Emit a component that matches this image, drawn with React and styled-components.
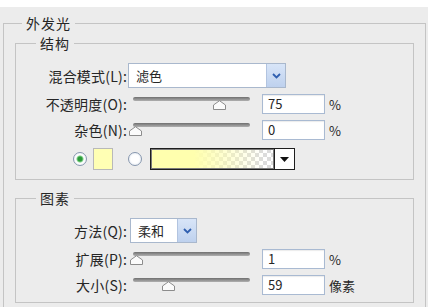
import React from "react";
import styled, { createGlobalStyle } from "styled-components";

const GlobalStyle = createGlobalStyle`
  html, body {
    margin: 0;
    padding: 0;
  }
  body {
    background: #ececec;
    color: #262626;
    font-family: "Noto Sans CJK SC", "Liberation Sans", sans-serif;
    font-size: 14px;
    overflow: hidden;
  }
`;

const StyledTopStrip = styled.div`
  background: #fff;
  height: 7px;
`;
StyledTopStrip.displayName = "StyledTopStrip";

const StyledOuterGroup = styled.fieldset`
  border: 1px solid #c4c4c4;
  margin: 9px 2px 0 3px;
  min-width: 0;
  padding: 6px 11px 20px;
`;
StyledOuterGroup.displayName = "StyledOuterGroup";

const StyledGroup = styled.fieldset`
  border: 1px solid #c4c4c4;
  margin: ${({ $top }) => $top || 0}px 0 0;
  min-width: 0;
  padding: 13px 0 ${({ $bottom }) => $bottom}px;
  display: flex;
  flex-direction: column;
`;
StyledGroup.displayName = "StyledGroup";

const StyledLegend = styled.legend`
  font-size: 14px;
  letter-spacing: 1px;
  line-height: 14px;
  margin-left: ${({ $offset }) => $offset}px;
  padding: 0 4px;
  color: #262626;
`;
StyledLegend.displayName = "StyledLegend";

const StyledRow = styled.div`
  align-items: center;
  display: flex;
  height: ${({ $height }) => $height}px;
  margin-top: ${({ $gap }) => $gap || 0}px;
`;
StyledRow.displayName = "StyledRow";

const StyledLabel = styled.div`
  flex-shrink: 0;
  letter-spacing: 0.2px;
  text-align: right;
  white-space: nowrap;
  width: 111px;
`;
StyledLabel.displayName = "StyledLabel";

const StyledSelect = styled.div`
  background: #fff;
  border: 1px solid #a9b8cd;
  box-sizing: border-box;
  display: flex;
  height: 25px;
  margin-left: ${({ $offset }) => $offset}px;
  width: ${({ $width }) => $width}px;
`;
StyledSelect.displayName = "StyledSelect";

const StyledSelectText = styled.div`
  align-items: center;
  display: flex;
  flex: 1;
  font-size: 13px;
  padding-left: 7px;
`;
StyledSelectText.displayName = "StyledSelectText";

const StyledSelectArrow = styled.div`
  align-items: center;
  background: linear-gradient(#d8e5f8, #bed1ee);
  border-left: 1px solid #b2c4e0;
  display: flex;
  justify-content: center;
  width: 18px;
`;
StyledSelectArrow.displayName = "StyledSelectArrow";

const StyledSlider = styled.div`
  flex-shrink: 0;
  height: 20px;
  margin-left: 6px;
  position: relative;
  width: 117px;
`;
StyledSlider.displayName = "StyledSlider";

const StyledTrack = styled.div`
  background: linear-gradient(#6f6f6f, #b0b0b0);
  border-radius: 2px;
  height: 4px;
  margin-top: 3px;
`;
StyledTrack.displayName = "StyledTrack";

const StyledThumb = styled.svg`
  position: absolute;
  top: 6px;
`;
StyledThumb.displayName = "StyledThumb";

const StyledBox = styled.div`
  background: #fff;
  border: 1px solid #a9bad2;
  box-shadow: inset 0 1px 1px rgba(0, 0, 0, 0.08);
  box-sizing: border-box;
  font-size: 13px;
  height: 20px;
  line-height: 18px;
  margin-left: 12px;
  padding-left: 5px;
  width: 63px;
`;
StyledBox.displayName = "StyledBox";

const StyledUnit = styled.div`
  font-size: 13px;
  margin-left: 4px;
  white-space: nowrap;
`;
StyledUnit.displayName = "StyledUnit";

const StyledRadio = styled.div`
  background: ${({ $checked }) =>
    $checked
      ? "radial-gradient(circle, #2c9a3a 0 2px, #7fcf88 3px, #fff 4px, #e3e9f1 100%)"
      : "radial-gradient(circle, #fff 0 45%, #dbe3ee 100%)"};
  border: 1px solid #8797ae;
  border-radius: 50%;
  box-sizing: border-box;
  flex-shrink: 0;
  height: 14px;
  margin-left: ${({ $offset }) => $offset}px;
  width: 14px;
`;
StyledRadio.displayName = "StyledRadio";

const StyledSwatch = styled.div`
  background: #ffffb4;
  border: 1px solid #b9b9b9;
  box-sizing: border-box;
  height: 22px;
  margin-left: 6px;
  width: 20px;
`;
StyledSwatch.displayName = "StyledSwatch";

const StyledGradientPicker = styled.div`
  border: 1px solid #1e1e1e;
  box-sizing: border-box;
  display: flex;
  height: 22px;
  margin-left: 8px;
  width: 145px;
`;
StyledGradientPicker.displayName = "StyledGradientPicker";

const StyledGradientFill = styled.div`
  background:
    linear-gradient(to right, #ffffae 0, #ffffae 35%, rgba(255, 255, 174, 0) 92%),
    conic-gradient(#dcdcdc 25%, #fff 0 50%, #dcdcdc 0 75%, #fff 0) 0 0 / 8px 8px;
  box-shadow: inset 0 0 0 1px #7a7a7a;
  flex: 1;
`;
StyledGradientFill.displayName = "StyledGradientFill";

const StyledGradientArrow = styled.div`
  align-items: center;
  background: #fff;
  border-left: 1px solid #1e1e1e;
  display: flex;
  justify-content: center;
  width: 19px;
`;
StyledGradientArrow.displayName = "StyledGradientArrow";

const ChevronIcon = () => (
  <svg width="9" height="6" viewBox="0 0 9 6">
    <polyline points="1,1 4.5,4.5 8,1" fill="none" stroke="#2f5fb0" strokeWidth="1.8" />
  </svg>
);

const TriangleIcon = () => (
  <svg width="9" height="5" viewBox="0 0 9 5">
    <polygon points="0,0 9,0 4.5,5" fill="#111" />
  </svg>
);

const getSlider = (percent) => {
  const center = 2 + (percent / 100) * 113;
  return (
    <StyledSlider>
      <StyledTrack />
      <StyledThumb width="13" height="10" viewBox="0 0 13 10" style={{ left: center - 6.5 }}>
        <path d="M0.5 5 L6.5 0.7 L12.5 5 V9.5 H0.5 Z" fill="#fbfbfb" stroke="#8c8c8c" />
      </StyledThumb>
    </StyledSlider>
  );
};

const getSliderRow = ({ label, value, percent, unit }, gap) => (
  <StyledRow key={label} $height={20} $gap={gap}>
    <StyledLabel>{label}</StyledLabel>
    {getSlider(percent)}
    <StyledBox>{value}</StyledBox>
    <StyledUnit>{unit}</StyledUnit>
  </StyledRow>
);

const getSelectRow = (label, text, width, offset) => (
  <StyledRow $height={25}>
    <StyledLabel>{label}</StyledLabel>
    <StyledSelect $width={width} $offset={offset}>
      <StyledSelectText>{text}</StyledSelectText>
      <StyledSelectArrow>
        <ChevronIcon />
      </StyledSelectArrow>
    </StyledSelect>
  </StyledRow>
);

const structureSliders = [
  { label: "不透明度(O):", value: "75", percent: 75, unit: "%" },
  { label: "杂色(N):", value: "0", percent: 0, unit: "%" }
];

const elementSliders = [
  { label: "扩展(P):", value: "1", percent: 1, unit: "%" },
  { label: "大小(S):", value: "59", percent: (59 / 200) * 100, unit: "像素" }
];

const App = () => (
  <>
    <GlobalStyle />
    <StyledTopStrip />
    <StyledOuterGroup>
      <StyledLegend $offset={7}>外发光</StyledLegend>

      <StyledGroup $bottom={9}>
        <StyledLegend $offset={20}>结构</StyledLegend>
        {getSelectRow("混合模式(L):", "滤色", 158, 1)}
        {structureSliders.map((item) => getSliderRow(item, 6))}
        <StyledRow $height={22} $gap={8}>
          <StyledRadio $checked $offset={57} />
          <StyledSwatch />
          <StyledRadio $offset={15} />
          <StyledGradientPicker>
            <StyledGradientFill />
            <StyledGradientArrow>
              <TriangleIcon />
            </StyledGradientArrow>
          </StyledGradientPicker>
        </StyledRow>
      </StyledGroup>

      <StyledGroup $top={11} $bottom={7}>
        <StyledLegend $offset={20}>图素</StyledLegend>
        {getSelectRow("方法(Q):", "柔和", 67, 3)}
        {elementSliders.map((item) => getSliderRow(item, 6))}
      </StyledGroup>
    </StyledOuterGroup>
  </>
);

export default App;
